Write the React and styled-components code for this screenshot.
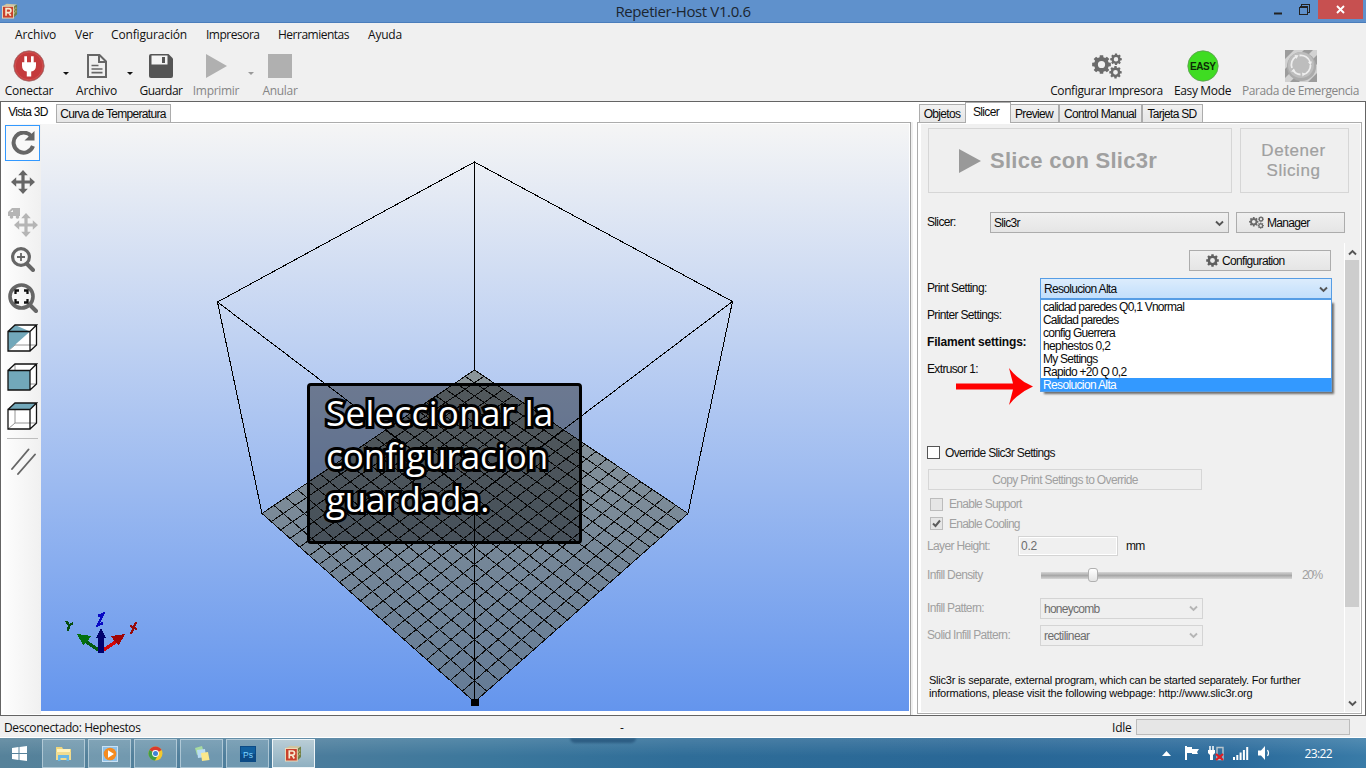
import React from "react";
import styled, { createGlobalStyle, css } from "styled-components";

const Global = createGlobalStyle`
  * { box-sizing: border-box; }
  html, body { margin: 0; padding: 0; overflow: hidden; }
  body { width: 1366px; height: 768px; background: #f0f0f0; }
  svg { display: block; flex: none; }
`;

const ui = css`font-family: "Open Sans", "Noto Sans", sans-serif; font-size: 12px;`;
const sans = css`font-family: "Liberation Sans", Arial, sans-serif; font-size: 12px; letter-spacing: -0.68px;`;

const Window = styled.div`
  ${ui}
  width: 1366px; height: 768px; display: flex; flex-direction: column;
  background: #f0f0f0; color: #111; white-space: nowrap;
`;

/* ---- title bar ---- */
const TitleBar = styled.header`
  height: 23px; flex: none; display: grid; grid-template-columns: 1fr auto 1fr; align-items: start;
  background: #5f91cc; border-bottom: 1px solid #4a7dbb;
`;
const AppIcon = styled.div`padding: 3px 0 0 2px;`;
const Title = styled.div`font-size: 15px; line-height: 23px; color: #1b2530; letter-spacing: -0.38px;`;
const Controls = styled.div`display: flex; justify-content: flex-end; margin-right: 3px;`;
const Control = styled.div`
  width: ${(p) => p.$w}px; height: 19px; display: flex; align-items: center; justify-content: center;
  background: ${(p) => (p.$close ? "#c75050" : "transparent")};
`;

/* ---- menu and toolbar ---- */
const MenuBar = styled.nav`height: 24px; flex: none; display: flex; padding-left: 15px; gap: 19px; line-height: 24px;`;
const MenuItem = styled.span`letter-spacing: ${(p) => p.$ls || 0}px; width: ${(p) => p.$w}px;`;
const Toolbar = styled.div`height: 54px; flex: none; display: flex; padding-right: 5px;`;
const Tool = styled.div`
  width: ${(p) => p.$w}px; margin-left: ${(p) => p.$gap || 0}px;
  display: flex; flex-direction: column; align-items: center;
  color: ${(p) => (p.$off ? "#858585" : "#111")};
`;
const ToolIcon = styled.div`height: 35px; display: flex; align-items: center; padding-top: 3px;`;
const ToolText = styled.span`line-height: 17px; letter-spacing: ${(p) => p.$ls || 0}px;`;
const CaretCell = styled.div`
  width: ${(p) => p.$w}px; padding-top: 25px; display: flex; justify-content: center;
  &::after { content: ""; height: 0; border: 3px solid transparent; border-bottom: 0; border-top-color: ${(p) => (p.$off ? "#999" : "#111")}; }
`;
const Spacer = styled.div`flex: 1;`;

/* ---- workspace ---- */
const Workspace = styled.main`
  height: 615px; flex: none; display: flex; border: 1px solid #646464; background: #fff;
`;
const LeftPane = styled.section`width: 909px; flex: none; display: flex; flex-direction: column; padding-left: 1px; border-bottom: 1px solid #fff;`;
const Gutter = styled.div`width: 7px; flex: none; margin-top: 20px; background: linear-gradient(90deg, #f0f0f0 2px, #fff 2px); border-left: 1px solid #a0a0a0;`;
const RightPane = styled.section`width: 445px; flex: none; display: flex; flex-direction: column; margin-right: auto;`;
const Tabs = styled.div`height: 20px; flex: none; display: flex; align-items: flex-end; padding-left: ${(p) => p.$pad}px;`;
const Tab = styled.div`
  ${sans}
  position: relative; width: ${(p) => p.$w}px; height: ${(p) => (p.$on ? 21 : 18)}px; flex: none;
  margin-bottom: ${(p) => (p.$on ? -1 : 0)}px; text-align: center; z-index: ${(p) => (p.$on ? 1 : 0)};
  line-height: 18px; color: #0a0a0a; padding-right: ${(p) => (p.$on ? p.$pr ?? 4 : 1)}px;
  letter-spacing: ${(p) => p.$ls ?? -0.68}px;
  border: 1px solid #acacac; border-bottom: 0; margin-left: ${(p) => p.$ml || 0}px;
  background: ${(p) => (p.$on ? "#fff" : "linear-gradient(#f1f1f1, #e6e6e6)")};
  ${(p) => p.$bare && css`border-color: #fff;`}
`;
const LeftBody = styled.div`flex: 1; border-top: 1px solid #acacac; padding: 1px 0 0 2px; display: flex; min-height: 0;`;
const ViewTools = styled.aside`
  width: 37px; flex: none; display: flex; flex-direction: column; align-items: flex-start; padding-left: 1px;
  background: linear-gradient(90deg, #fdfdfd, #f0f0f0); padding-top: 1px;
`;
const ViewTool = styled.div`
  width: 35px; height: ${(p) => p.$h || 39}px; flex: none; display: flex; align-items: center; justify-content: center;
  ${(p) => p.$on && css`border: 1px solid #3399ff; background: #f9f9f9;`}
`;
const Divider = styled.div`width: 31px; height: 1px; flex: none; background: #bdbdbd; margin: 3px 0 1px 2px;`;
const Viewport = styled.div`
  position: relative; width: 868px; height: 587px; flex: none; background: linear-gradient(#f5f5f5, #6495ed);
`;
const Callout = styled.div`
  position: absolute; left: 266px; top: 259px; width: 275px; height: 161px; padding: 5px 0 0 16px;
  background: rgba(0, 0, 0, 0.4); border: 3px solid #000; border-radius: 4px;
`;
const CalloutLine = styled.div`
  font: 500 35px/43px "Open Sans", "Noto Sans", sans-serif; color: #fff; letter-spacing: ${(p) => p.$ls}px;
  -webkit-text-stroke: 6px #000; paint-order: stroke fill;
`;

/* ---- slicer panel ---- */
const PanelFrame = styled.div`flex: 1; border: 1px solid #acacac; padding: 1px 1px 1px 3px; margin-bottom: 1px; display: flex; min-height: 0;`;
const Panel = styled.div`${sans} flex: 1; background: #f0f0f0; display: flex; flex-direction: column; min-width: 0;`;
const SliceRow = styled.div`display: flex; gap: 8px; padding: 4px 0 0 7px; height: 69px; flex: none;`;
const BigButton = styled.div`
  width: ${(p) => p.$w}px; height: 65px; border: 1px solid #d6d6d6; background: #efefef; color: #a0a0a0;
  display: flex; align-items: center; justify-content: ${(p) => (p.$start ? "flex-start" : "center")};
  padding: ${(p) => (p.$start ? "0 0 0 30px" : "0 2px 0 0")}; gap: 9px; text-align: center;
`;
const SliceText = styled.b`font-size: 22px; letter-spacing: 0.28px;`;
const StopText = styled.span`font-size: 17px; line-height: 20px; letter-spacing: 0.55px; -webkit-text-stroke: 0.2px #a0a0a0;`;
const SlicerRow = styled.div`display: flex; align-items: center; height: 21px; margin-top: 19px; padding-left: 6px; flex: none;`;
const Label = styled.label`
  width: ${(p) => p.$w}px; flex: none; color: ${(p) => (p.$off ? "#a0a0a0" : "#0a0a0a")};
  font-weight: ${(p) => (p.$bold ? 700 : 400)}; letter-spacing: ${(p) => p.$ls ?? -0.65}px; padding-bottom: ${(p) => p.$lift || 0}px;
`;
const Combo = styled.div`
  position: relative; width: ${(p) => p.$w}px; height: 21px; flex: none;
  display: flex; align-items: center; justify-content: space-between; padding: 1px ${(p) => (p.$open ? 3 : 4)}px 0 3px;
  border: 1px solid ${(p) => (p.$open ? "#569de5" : p.$off ? "#d4d4d4" : "#acacac")};
  background: ${(p) => (p.$open ? "linear-gradient(#dcecfc, #c2dffc)" : p.$off ? "#efefef" : "linear-gradient(#f0f0f0, #e5e5e5)")};
  color: ${(p) => (p.$off ? "#6d6d6d" : "#0a0a0a")}; letter-spacing: ${(p) => p.$ls ?? -0.68}px;
`;
const Button = styled.div`
  width: ${(p) => p.$w}px; height: 21px; flex: none; display: flex; align-items: center; justify-content: ${(p) => (p.$pad ? "flex-start" : "center")};
  gap: 3px; padding-left: ${(p) => p.$pad || 0}px; margin-left: ${(p) => p.$ml || 0}px;
  border: 1px solid ${(p) => (p.$off ? "#d6d6d6" : "#acacac")};
  background: ${(p) => (p.$off ? "#efefef" : "linear-gradient(#f0f0f0, #e5e5e5)")};
  color: ${(p) => (p.$off ? "#a0a0a0" : "#0a0a0a")}; letter-spacing: ${(p) => p.$ls ?? -0.68}px;
`;
const ScrollArea = styled.div`flex: 1; min-height: 0; margin-top: 10px; display: flex;`;
const Form = styled.div`width: 423px; flex: none; padding: 7px 0 0 6px; display: flex; flex-direction: column;`;
const Row = styled.div`height: ${(p) => p.$h}px; flex: none; display: flex; align-items: center; padding-left: ${(p) => p.$pad || 0}px;`;
const ListBox = styled.ul`
  position: absolute; left: -1px; top: 20px; width: 292px; margin: 0; padding: 0; list-style: none; z-index: 2;
  background: #fff; border: 1px solid #569de5; box-shadow: 3px 3px 2px -1px rgba(0, 0, 0, 0.55);
`;
const Option = styled.li`
  height: 13px; line-height: 14px; padding-left: 2px; letter-spacing: ${(p) => p.$ls}px;
  ${(p) => p.$on && css`background: #3399ff; color: #fff;`}
`;
const Pointer = styled.div`position: absolute; left: -85px; top: 89px;`;
const Check = styled.span`
  width: 13px; height: 13px; flex: none; margin-right: ${(p) => p.$gap || 5}px; display: flex; align-items: center; justify-content: center;
  border: 1px solid ${(p) => (p.$off ? "#bcbcbc" : "#555")}; background: ${(p) => (p.$off ? "#e6e6e6" : "#fff")};
`;
const Field = styled.div`
  width: 100px; height: 20px; border: 1px solid #d4d4d4; box-shadow: inset 0 0 0 1px #fff; color: #6d6d6d;
  line-height: 19px; padding-left: 2px; margin-right: 8px; letter-spacing: -0.2px;
`;
const Slider = styled.div`
  width: 251px; height: 15px; display: flex; align-items: center; margin-right: 10px; padding-left: 47px;
  background: linear-gradient(#d6d6d6, #a8a8a8 50%, #d6d6d6) center / 100% 7px no-repeat;
`;
const Thumb = styled.span`width: 10px; height: 14px; border: 1px solid #b0b0b0; border-radius: 3px; background: linear-gradient(#fff, #e4e4e4);`;
const Note = styled.p`margin: 0; padding-left: 2px; font-size: 11px; line-height: 13px; color: #0a0a0a;`;
const NoteLine = styled.span`display: block; letter-spacing: ${(p) => p.$ls}px;`;
const ScrollBar = styled.div`
  width: 17px; display: flex; flex-direction: column; align-items: center; border-left: 1px solid #fff; padding: 6px 2px 5px 0;
`;
const ScrollThumb = styled.div`width: 14px; height: 347px; background: #cdcdcd; margin: 4px 0 auto;`;

/* ---- status bar and taskbar ---- */
const StatusBar = styled.footer`
  height: 22px; flex: none; display: flex; align-items: center; padding: 0 16px 0 4px; border-bottom: 1px solid #fff;
`;
const StatusText = styled.span`width: ${(p) => p.$w}px; letter-spacing: ${(p) => p.$ls || 0}px; line-height: 20px; padding-top: 2px;`;
const Progress = styled.div`width: 214px; height: 16px; background: #e6e6e6; border: 1px solid #bcbcbc;`;
const Taskbar = styled.div`
  position: relative; flex: 1; display: flex; align-items: stretch; overflow: hidden;
  background:
    linear-gradient(rgba(255,255,255,.13), rgba(255,255,255,0) 60%),
    linear-gradient(90deg, #56829a 0%, #4c7d9c 22%, #3b779c 36%, #2f6d98 50%, #296796 72%, #2a6a9b 90%, #397ba7 100%);
`;
const Start = styled.div`width: 42px; padding: 8px 0 0 12px;`;
const TaskButton = styled.div`
  width: 43px; height: 29px; margin: 1px 3px 0 0; display: flex; align-items: center; justify-content: center;
  border: 1px solid ${(p) => (p.$on ? "#eef5f8" : "rgba(220,235,242,.55)")};
  background: ${(p) => (p.$on ? "linear-gradient(#b9cdd6, #8fb0c1)" : "rgba(190,212,222,.3)")};
`;
const Islet = styled.div`width: 66px; height: 5px; margin-left: 252px; background: #1f4c73; border-radius: 0 0 30px 30px; opacity: .65; filter: blur(1px);`;
const Tray = styled.div`display: flex; align-items: center; margin-left: auto; gap: 8px; color: #fff;`;
const TrayArrow = styled.div`margin-right: 5px;`;
const Clock = styled.span`margin: 0 34px 0 23px; font-size: 12px; letter-spacing: -0.6px;`;

/* ---- drawings ---- */
function gearPath(cx, cy, r, teeth = 8) {
  const pts = [];
  for (let i = 0; i < teeth; i++) {
    const a = (i / teeth) * Math.PI * 2;
    const s = Math.PI / teeth;
    [[-0.66, 0.78], [-0.46, 1], [0.46, 1], [0.66, 0.78]].forEach(([k, m]) =>
      pts.push(`${(cx + Math.cos(a + k * s) * r * m).toFixed(2)} ${(cy + Math.sin(a + k * s) * r * m).toFixed(2)}`)
    );
  }
  const h = r * 0.38;
  return `M${pts.join("L")}ZM${cx - h} ${cy}a${h} ${h} 0 1 0 ${h * 2} 0a${h} ${h} 0 1 0 ${-h * 2} 0Z`;
}
const Gears = ({ w, h }) => (
  <svg width={w} height={h} viewBox="0 0 30 26" fill="#6b6b6b" fillRule="evenodd">
    <path d={gearPath(9.5, 11.5, 9.5)} />
    <path d={gearPath(24, 6.3, 5.9)} />
    <path d={gearPath(23.5, 19.3, 6.3)} />
  </svg>
);
const Gear = () => (
  <svg width="13" height="13" viewBox="0 0 13 13" fill="#5f5f5f" fillRule="evenodd"><path d={gearPath(6.5, 6.5, 6.4)} /></svg>
);
const Chevron = ({ c = "#555", up }) => (
  <svg width="9" height="7" viewBox="0 0 9 7" fill="none" stroke={c} strokeWidth="1.9">
    <path d={up ? "M1 5.5 4.5 2 8 5.5" : "M1 1.5 4.5 5 8 1.5"} />
  </svg>
);
const HostLogo = ({ s = 17 }) => (
  <svg width={s} height={s} viewBox="0 0 17 17">
    <path d="M1 3 5 .8 16 1.5 12 4Z" fill="#cfc5a0" />
    <path d="M12 4 16 1.5V12l-4 4Z" fill="#6f7f45" />
    <path d="M13 6v7M14.7 4.5v7" stroke="#c3b47c" strokeWidth="1" strokeDasharray="2 1.5" />
    <rect x=".5" y="3.5" width="11.8" height="12.5" fill="#c9402c" stroke="#ead9b8" />
    <path d="M4.3 13.5V6H7.4a2 2 0 0 1 0 4.2H4.5M7.2 10.2 9.3 13.5" fill="none" stroke="#f6ead0" strokeWidth="1.7" />
  </svg>
);
const Plug = () => (
  <svg width="32" height="32" viewBox="0 0 32 32">
    <circle cx="16" cy="16" r="15.2" fill="#c43a3c" stroke="#a07070" strokeWidth=".8" />
    <circle cx="16" cy="16" r="13.8" fill="none" stroke="#d35a58" strokeWidth=".7" />
    <path d="M11.3 6.2h2.7v6h4v-6h2.700v6h2.300v3.200c0 3.600-1.800 5.600-4.800 6.200v4.800h-4.400v-4.800c-3-.6-4.800-2.600-4.800-6.200v-3.200h2.300Z" fill="#fff" />
  </svg>
);
const FileIcon = () => (
  <svg width="20" height="24" viewBox="0 0 20 24" fill="none" stroke="#666" strokeWidth="2">
    <path d="M1 1h11.5L19 7.5V23H1Z" /><path d="M12 1v7h7" /><path d="M4.5 11.5h7M4.5 15h11M4.5 18.7h11" strokeWidth="1.7" />
  </svg>
);
const SaveIcon = () => (
  <svg width="24" height="24" viewBox="0 0 24 24">
    <path d="M2 0h17.5L24 4.5V22a2 2 0 0 1-2 2H2a2 2 0 0 1-2-2V2A2 2 0 0 1 2 0Z" fill="#555" />
    <path d="M2.500 1.5h16v9H2.500Z" fill="#f4f4f4" /><path d="M13 3h3v6h-3Z" fill="#555" />
  </svg>
);
const StopLamp = () => (
  <svg width="32" height="32" viewBox="0 0 32 32">
    <rect width="32" height="32" fill="#d2d2d2" />
    <path d="M0 0h9L0 9ZM19 0h9L0 28v-9ZM32 5v9L14 32H5ZM32 23v9h-9Z" fill="#9c9c9c" />
    <circle cx="16.5" cy="16.5" r="14.6" fill="#ababab" /><circle cx="16" cy="15" r="13" fill="#bdbdbd" />
    <g fill="none" stroke="#ededed" strokeWidth="1.8">
      <path d="M7 18a9.5 9.5 0 0 1 4-11.5M14.5 5.5A9.5 9.5 0 0 1 25 12M25.5 15a9.5 9.5 0 0 1-7 9.5M15.500 24.500A9.500 9.500 0 0 1 8 20" />
    </g>
    <path d="M9.5 5l4 .3-2 3.600ZM23 12l4-.5-1.500 4ZM17 22.500l.5 4 3-2.800ZM6 21.500l3-3 1.500 3.500Z" fill="#ededed" />
  </svg>
);
const arrowsPath = "M12 0l4.800 5.200h-3.200v5.200h5.200V7.200L24 12l-5.200 4.800v-3.200h-5.200v5.200h3.200L12 24l-4.800-5.200h3.200v-5.200H5.200v3.200L0 12l5.200-4.800v3.200h5.200V5.200H7.200Z";
const cubeEdges = "M1 7.500H23V27H1ZM1 7.500 8 1H29.500L23 7.500M29.500 1V21L23 27";
const Cube = ({ kind }) => (
  <svg width="31" height="28" viewBox="0 0 31 28" fill="none">
    <path d="M1 7.500 8 1H29.500V21L23 27H1Z" fill="#fff" />
    <path d="M8 1V21H29.500M8 21 1 27" stroke="#888" strokeWidth=".9" />
    {kind === "half" && <path d="M1 7.500 8 1 23 7.500 1 27Z" fill="#72a8ba" />}
    {kind === "front" && <path d="M1 7.500H23V27H1Z" fill="#72a8ba" />}
    {kind === "top" && <path d="M1 7.500 8 1H29.500L23 7.500Z" fill="#72a8ba" />}
    <path d={cubeEdges} stroke="#111" strokeWidth="1.300" />
  </svg>
);

/* Perspective projection of the 20 x 20 print bed onto the viewport. */
const bed = { top: [433.5, 246], right: [647, 389.5], bottom: [433.5, 578], left: [221, 389.5] };
function project(u, v) {
  const [x0, y0] = bed.top, [x1, y1] = bed.right, [x2, y2] = bed.bottom, [x3, y3] = bed.left;
  const dx1 = x1 - x2, dx2 = x3 - x2, sx = x0 - x1 + x2 - x3;
  const dy1 = y1 - y2, dy2 = y3 - y2, sy = y0 - y1 + y2 - y3;
  const den = dx1 * dy2 - dx2 * dy1;
  const g = (sx * dy2 - dx2 * sy) / den, h = (dx1 * sy - sx * dy1) / den;
  const w = g * u + h * v + 1;
  return [
    (((x1 - x0 + g * x1) * u + (x3 - x0 + h * x3) * v + x0) / w).toFixed(2),
    (((y1 - y0 + g * y1) * u + (y3 - y0 + h * y3) * v + y0) / w).toFixed(2),
  ].join(" ");
}
const gridPath = Array.from({ length: 21 }, (_, i) => {
  const t = i / 20;
  return `M${project(t, 0)}L${project(t, 1)}M${project(0, t)}L${project(1, t)}`;
}).join("");

const Scene = () => (
  <svg width="868" height="587" viewBox="0 0 868 587">
    <defs>
      <linearGradient id="bedFill" x1="0" y1="0" x2="0" y2="1">
        <stop offset="0" stopColor="#8b9599" /><stop offset="1" stopColor="#647b96" />
      </linearGradient>
    </defs>
    <path d={`M${project(0, 0)}L${project(1, 0)}L${project(1, 1)}L${project(0, 1)}Z`} fill="url(#bedFill)" />
    <g fill="none" stroke="#000" strokeWidth="1" shapeRendering="crispEdges">
      <path d={gridPath} stroke="#0c0c0c" />
      <path d="M433.500 38 176.500 178 433.500 373 691.500 177.500 433.500 38V246M433.500 373V578M176.500 178 221 389.500M691.500 177.500 647 389.500" />
    </g>
    <rect x="430" y="575" width="8" height="7" fill="#000" />
    <g shapeRendering="crispEdges">
      <path d="M59 527 44 517" stroke="#045c10" strokeWidth="3.500" /><path d="M36 510 50 512 46 518 42 521Z" fill="#04700f" />
      <path d="M61 527 76 517" stroke="#d40606" strokeWidth="3.500" /><path d="M84 510 70 512 74 518 78 521Z" fill="#a00505" />
      <path d="M60 529V513" stroke="#02026e" strokeWidth="5.500" /><path d="M60 504 65 514H55Z" fill="#02026e" />
      <path d="M25 497 28 501 27 507M28 502 32 499" fill="none" stroke="#064d0e" strokeWidth="2.200" />
      <path d="M95 498 90 510M89 502 96 505" fill="none" stroke="#990a0a" strokeWidth="2.200" />
      <path d="M57 492 62 490 57 501 62 499" fill="none" stroke="#0808c4" strokeWidth="2.500" />
    </g>
  </svg>
);

const profiles = [
  ["calidad paredes Q0,1 Vnormal", -0.75], ["Calidad paredes", -0.8], ["config Guerrera", -0.76],
  ["hephestos 0,2", -0.62], ["My Settings", -0.75], ["Rapido +20 Q 0,2", -0.69], ["Resolucion Alta", -0.64],
];

export default function App() {
  return (
    <Window>
      <Global />
      <TitleBar>
        <AppIcon><HostLogo s={16} /></AppIcon>
        <Title>Repetier-Host V1.0.6</Title>
        <Controls>
          <Control $w={26}><svg width="9" height="12"><path d="M1 9.500h8" stroke="#222" strokeWidth="2" /></svg></Control>
          <Control $w={28}>
            <svg width="11" height="11" fill="none" stroke="#222" shapeRendering="crispEdges"><path d="M2.500 2V.5h8v8H9" /><path d="M.5 3h7.500v7.500H.5ZM.5 2.500h8" /></svg>
          </Control>
          <Control $w={45} $close><svg width="9" height="9" stroke="#fff" strokeWidth="1.900"><path d="M1 1 8 8M8 1 1 8" /></svg></Control>
        </Controls>
      </TitleBar>
      <MenuBar>
        <MenuItem $w={41} $ls={-0.1}>Archivo</MenuItem>
        <MenuItem $w={17} $ls={-0.2}>Ver</MenuItem>
        <MenuItem $w={76} $ls={-0.15}>Configuración</MenuItem>
        <MenuItem $w={53} $ls={-0.5}>Impresora</MenuItem>
        <MenuItem $w={71} $ls={-0.5}>Herramientas</MenuItem>
        <MenuItem $w={40} $ls={-0.2}>Ayuda</MenuItem>
      </MenuBar>
      <Toolbar>
        <Tool $w={58}><ToolIcon><Plug /></ToolIcon><ToolText $ls={-0.25}>Conectar</ToolText></Tool>
        <CaretCell $w={15} />
        <Tool $w={47}><ToolIcon><FileIcon /></ToolIcon><ToolText $ls={-0.1}>Archivo</ToolText></Tool>
        <CaretCell $w={19} />
        <Tool $w={44}><ToolIcon><SaveIcon /></ToolIcon><ToolText $ls={-0.5}>Guardar</ToolText></Tool>
        <Tool $w={50} $gap={8} $off>
          <ToolIcon><svg width="21" height="24"><path d="M0 0 21 12 0 24Z" fill="#b0b0b0" /></svg></ToolIcon><ToolText $ls={-0.3}>Imprimir</ToolText>
        </Tool>
        <CaretCell $w={20} $off />
        <Tool $w={38} $off>
          <ToolIcon><svg width="24" height="24"><rect width="24" height="24" fill="#b0b0b0" /></svg></ToolIcon><ToolText $ls={-0.3}>Anular</ToolText>
        </Tool>
        <Spacer />
        <Tool $w={117}><ToolIcon><Gears w={30} h={26} /></ToolIcon><ToolText $ls={-0.4}>Configurar Impresora</ToolText></Tool>
        <Tool $w={75}>
          <ToolIcon>
            <svg width="32" height="32" viewBox="0 0 32 32">
              <circle cx="16" cy="16" r="15.200" fill="#3fdc22" stroke="#5f9a55" strokeWidth=".8" />
              <text x="16" y="20" textAnchor="middle" fontFamily="Liberation Sans" fontWeight="700" fontSize="10" textLength="26" fill="#0c2a06">EASY</text>
            </svg>
          </ToolIcon>
          <ToolText $ls={-0.35}>Easy Mode</ToolText>
        </Tool>
        <Tool $w={121} $off><ToolIcon><StopLamp /></ToolIcon><ToolText $ls={-0.42}>Parada de Emergencia</ToolText></Tool>
      </Toolbar>

      <Workspace>
        <LeftPane>
          <Tabs $pad={0}>
            <Tab $on $bare $pr={2} $w={54} $ls={-0.7}>Vista 3D</Tab>
            <Tab $w={115}>Curva de Temperatura</Tab>
          </Tabs>
          <LeftBody>
            <ViewTools>
              <ViewTool $on $h={36}>
                <svg width="24" height="25" viewBox="0 0 24 25"><path d="M20.500 5.500A10 10 0 1 0 22 15" fill="none" stroke="#666" strokeWidth="4" /><path d="M23.500 0V9.500H13.500Z" fill="#666" /></svg>
              </ViewTool>
              <ViewTool $h={42}><svg width="24" height="24" viewBox="0 0 24 24" fill="#666"><path d={arrowsPath} /></svg></ViewTool>
              <ViewTool $h={38}>
                <svg width="30" height="29" viewBox="0 0 30 29" fill="#b5b5b5">
                  <path d="M4 0h8v8H0V4ZM2.500 4H5V2Z" fillRule="evenodd" /><circle cx="3.500" cy="9" r="1.800" /><circle cx="9.500" cy="9" r="1.800" />
                  <g transform="translate(6 5)"><path d={arrowsPath} /></g>
                </svg>
              </ViewTool>
              <ViewTool $h={37}>
                <svg width="24" height="25" viewBox="0 0 24 25" fill="none" stroke="#666"><circle cx="10" cy="10" r="8.400" strokeWidth="3.200" /><path d="M16 17 22 23" strokeWidth="4" strokeLinecap="round" /><path d="M10 6v8M6 10h8" strokeWidth="1.800" /></svg>
              </ViewTool>
              <ViewTool $h={40}>
                <svg width="30" height="31" viewBox="0 0 30 31" fill="none" stroke="#666"><circle cx="13.500" cy="13.500" r="11.500" strokeWidth="3.600" /><path d="M22 22 28 28" strokeWidth="4" strokeLinecap="round" /><path d="M7.500 11V7.500H11M16 7.500h3.500V11M19.500 16v3.500H16M11 19.500H7.500V16" stroke="#111" strokeWidth="2.300" /></svg>
              </ViewTool>
              <ViewTool $h={39}><Cube kind="half" /></ViewTool>
              <ViewTool $h={39}><Cube kind="front" /></ViewTool>
              <ViewTool $h={39}><Cube kind="top" /></ViewTool>
              <Divider />
              <ViewTool $h={42}>
                <svg width="26" height="27" viewBox="0 0 26 27" stroke="#666" strokeWidth="1.900" strokeLinecap="round"><path d="M2 21 18.500 1.500M8 26 25 6.500" /></svg>
              </ViewTool>
            </ViewTools>
            <Viewport>
              <Scene />
              <Callout>
                <CalloutLine $ls={0.3}>Seleccionar la</CalloutLine>
                <CalloutLine $ls={0}>configuracion</CalloutLine>
                <CalloutLine $ls={-0.2}>guardada.</CalloutLine>
              </Callout>
            </Viewport>
          </LeftBody>
        </LeftPane>
        <Gutter />
        <RightPane>
          <Tabs $pad={2}>
            <Tab $w={47}>Objetos</Tab>
            <Tab $on $w={46} $ml={-1}>Slicer</Tab>
            <Tab $w={49} $ml={-1}>Preview</Tab>
            <Tab $w={83}>Control Manual</Tab>
            <Tab $w={61}>Tarjeta SD</Tab>
          </Tabs>
          <PanelFrame>
            <Panel>
              <SliceRow>
                <BigButton $w={304} $start>
                  <svg width="22" height="24"><path d="M0 0 22 12 0 24Z" fill="#999" /></svg>
                  <SliceText>Slice con Slic3r</SliceText>
                </BigButton>
                <BigButton $w={109}><StopText>Detener<br />Slicing</StopText></BigButton>
              </SliceRow>
              <SlicerRow>
                <Label $w={63} $lift={1}>Slicer:</Label>
                <Combo $w={239}>Slic3r<Chevron /></Combo>
                <Button $w={109} $ml={7} $pad={12}><Gears w={15} h={13} />Manager</Button>
              </SlicerRow>
              <ScrollArea>
                <Form>
                  <Row $h={21}><Button $w={142} $ml={262} $pad={16}><Gear />Configuration</Button></Row>
                  <Row $h={35}>
                    <Label $w={113} $lift={2}>Print Setting:</Label>
                    <Combo $w={292} $open>
                      Resolucion Alta<Chevron />
                      <ListBox>
                        {profiles.map(([name, ls], i) => <Option key={name} $ls={ls} $on={i === 6}>{name}</Option>)}
                      </ListBox>
                      <Pointer>
                        <svg width="77" height="37" viewBox="0 0 77 37"><path d="M0 15.500H57L53 0Q62 12 77 18.500 62 25 53 37L57 21.500H0Z" fill="#f00" /></svg>
                      </Pointer>
                    </Combo>
                  </Row>
                  <Row $h={18}><Label>Printer Settings:</Label></Row>
                  <Row $h={35}><Label $bold $ls={-0.18}>Filament settings:</Label></Row>
                  <Row $h={20}><Label>Extrusor 1:</Label></Row>
                  <Row $h={60} />
                  <Row $h={27}><Check />Override Slic3r Settings</Row>
                  <Row $h={27} $pad={1}><Button $off $w={274} $ls={-0.64}>Copy Print Settings to Override</Button></Row>
                  <Row $h={22} $pad={3}><Check $off $gap={6} /><Label $off $ls={-0.72}>Enable Support</Label></Row>
                  <Row $h={17} $pad={3}>
                    <Check $off $gap={6}><svg width="11" height="11" fill="none" stroke="#5c5c5c" strokeWidth="2"><path d="M2 5.500 4.500 8 9 2.500" /></svg></Check>
                    <Label $off $ls={-0.76}>Enable Cooling</Label>
                  </Row>
                  <Row $h={27}><Label $off $w={91}>Layer Height:</Label><Field>0.2</Field>mm</Row>
                  <Row $h={32}><Label $off $w={114}>Infill Density</Label><Slider><Thumb /></Slider><Label $off $ls={-1.4}>20%</Label></Row>
                  <Row $h={34}><Label $off $w={113}>Infill Pattern:</Label><Combo $off $w={163} $ls={-0.74}>honeycomb<Chevron c="#b5b5b5" /></Combo></Row>
                  <Row $h={20}><Label $off $w={113}>Solid Infill Pattern:</Label><Combo $off $w={163} $ls={-0.6}>rectilinear<Chevron c="#b5b5b5" /></Combo></Row>
                  <Row $h={83}>
                    <Note>
                      <NoteLine $ls={-0.24}>Slic3r is separate, external program, which can be started separately. For further</NoteLine>
                      <NoteLine $ls={-0.18}>informations, please visit the following webpage: http://www.slic3r.org</NoteLine>
                    </Note>
                  </Row>
                </Form>
                <ScrollBar><Chevron up /><ScrollThumb /><Chevron /></ScrollBar>
              </ScrollArea>
            </Panel>
          </PanelFrame>
        </RightPane>
      </Workspace>

      <StatusBar>
        <StatusText $w={616} $ls={-0.4}>Desconectado: Hephestos</StatusText>
        <StatusText $w={492}>-</StatusText>
        <StatusText $w={24} $ls={-0.2}>Idle</StatusText>
        <Progress />
      </StatusBar>
      <Taskbar>
        <Start>
          <svg width="16" height="15" fill="#fff"><path d="M0 2 6.500 1V7H0ZM7.500.9 15 0V7H7.500ZM0 8h6.500v6L0 13ZM7.500 8H15v7L7.500 14.100Z" /></svg>
        </Start>
        <TaskButton>
          <svg width="17" height="17" viewBox="0 0 17 17"><path d="M1 2h6l1 2h8v11H1Z" fill="#efd67c" /><path d="M2 4h13v5H2Z" fill="#fff3bd" /><path d="M1 7h15v8H1Z" fill="#f0dc90" /><path d="M3 16v-6h11v6h-2.500v-3h-6v3Z" fill="#69b8e6" /></svg>
        </TaskButton>
        <TaskButton>
          <svg width="16" height="16"><rect x=".5" y=".5" width="15" height="15" fill="#8fc2ea" stroke="#c9e2f5" /><circle cx="8" cy="8" r="6.300" fill="#f58b1f" /><path d="M6 4.200 12 8 6 11.800Z" fill="#fff" /></svg>
        </TaskButton>
        <TaskButton>
          <svg width="15" height="15" viewBox="0 0 15 15"><circle cx="7.500" cy="7.500" r="7" fill="#f5c92c" /><path d="M7.500 7.500 1.400 4A7 7 0 0 1 13.600 4Z" fill="#d83a2e" /><path d="M1.400 4A7 7 0 0 0 7 14.500L10 9 7.500 7.500Z" fill="#3f9e47" /><circle cx="7.500" cy="7.500" r="3.400" fill="#fff" /><circle cx="7.500" cy="7.500" r="2.500" fill="#3f83d4" /></svg>
        </TaskButton>
        <TaskButton>
          <svg width="16" height="16"><path d="M1 2 8 0 10 7 3 9Z" fill="#a8dba0" /><path d="M3 4 11 3 12 11 4 12Z" fill="#b9dcf4" /><path d="M7 7 14 6 15.500 14 8 15Z" fill="#fbe88b" /></svg>
        </TaskButton>
        <TaskButton>
          <svg width="16" height="16"><rect width="16" height="16" fill="#0c4b86" /><rect x="1" y="1" width="14" height="7" fill="#12609f" /><text x="8" y="11.500" textAnchor="middle" fontFamily="Liberation Sans" fontSize="8.500" fill="#7fd4ff">Ps</text></svg>
        </TaskButton>
        <TaskButton $on><HostLogo s={17} /></TaskButton>
        <Islet />
        <Tray>
          <TrayArrow><svg width="9" height="5"><path d="M0 5 4.500 0 9 5Z" fill="#fff" /></svg></TrayArrow>
          <svg width="16" height="16"><path d="M2 1v14" stroke="#fff" strokeWidth="2" /><path d="M3 2h5v2h7l-2 3 1 2H8V8H3Z" fill="#fff" /></svg>
          <svg width="17" height="16"><path d="M2 1v4M5 1v4" stroke="#fff" strokeWidth="1.500" /><path d="M0 5h7v3L5 10v5H2v-5L0 8Z" fill="#fff" /><path d="M9 2.500h6v12H9Z" fill="none" stroke="#b8c4cc" strokeWidth="1.400" /><path d="M8 9l7 6M15 9l-7 6" stroke="#e01b22" strokeWidth="2.300" /></svg>
          <svg width="16" height="13" fill="#fff"><path d="M0 10h2v3H0ZM3.300 8h2v5h-2ZM6.600 5.500h2V13h-2ZM9.900 3h2v10h-2ZM13.200 0h2v13h-2Z" /></svg>
          <svg width="16" height="14"><path d="M1 4.500h3L8 0v14L4 9.500H1Z" fill="#fff" /><path d="M10.500 4q2 3 0 6" fill="none" stroke="#fff" strokeWidth="1.200" /></svg>
          <Clock>23:22</Clock>
        </Tray>
      </Taskbar>
    </Window>
  );
}
